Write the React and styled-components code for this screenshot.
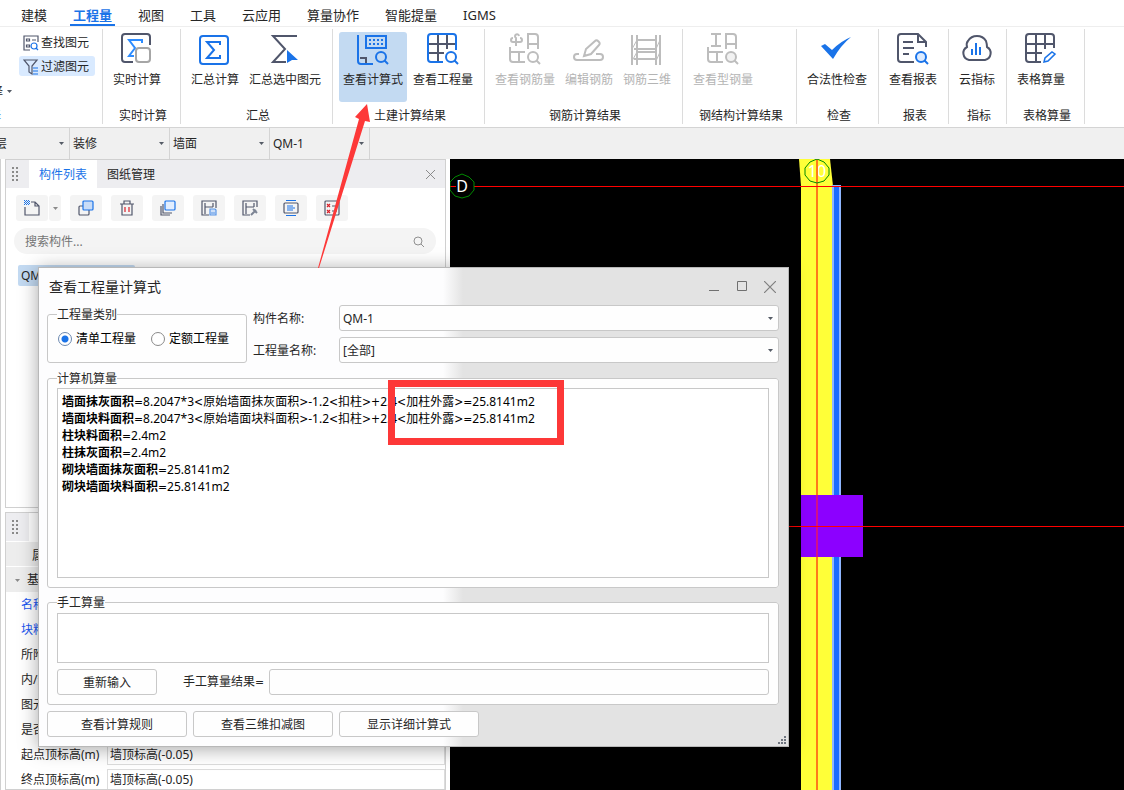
import React from 'react';
import styled, { createGlobalStyle } from 'styled-components';

const INK = '#50566b';
const BLUE = '#1a73e8';
const GREY = '#bdbdbd';
const RED = '#fd3838';

const GlobalStyle = createGlobalStyle`
  *, *::before, *::after { box-sizing: border-box; }
  html, body { margin: 0; padding: 0; background: #fff; }
  body, button, input, select, textarea {
    font-family: "Noto Sans", "Noto Sans CJK SC", sans-serif;
    font-size: 12px;
    line-height: 16px;
    color: #262626;
  }
  button, input, select, textarea {
    margin: 0; padding: 0; border: 0; background: none; outline: none; border-radius: 0;
  }
  button { white-space: nowrap; }
  svg { display: block; flex: none; }
`;

const Page = styled.div`
  position: relative;
  display: flex;
  flex-direction: column;
  height: 100vh;
  overflow: hidden;
`;

/* ---------- Menu ---------- */
const MenuBar = styled.nav`
  display: flex;
  gap: 20px;
  height: 27px;
  padding: 4px 0 0 18px;
  border-bottom: 1px solid #eee;
`;
const MenuTab = styled.button`
  height: 22px;
  padding: 1px 3px 0;
  font-size: 13px;
  line-height: 20px;
  color: ${(p) => (p.$active ? BLUE : '#262626')};
  font-weight: ${(p) => (p.$active ? 700 : 400)};
  border-bottom: 2px solid ${(p) => (p.$active ? BLUE : 'transparent')};
`;

/* ---------- Ribbon ---------- */
const Ribbon = styled.div`
  display: flex;
  height: 101px;
  padding: 2px 0 3px;
  border-bottom: 1px solid #d4d4d4;
`;
const Group = styled.section`
  display: flex;
  flex: none;
  flex-direction: column;
  justify-content: space-between;
  min-width: ${(p) => p.$min || 0}px;
  padding: 3px 6px 0;
  border-right: 1px solid #dcdcdc;
`;
const GroupTools = styled.div`
  display: flex;
  gap: 2px;
`;
const GroupName = styled.div`
  padding-left: 3px;
  text-align: center;
`;
const ToolButton = styled.button`
  display: flex;
  flex-direction: column;
  align-items: center;
  gap: 7px;
  height: 70px;
  padding: 1px 4px 0;
  border-radius: 3px;
  background: ${(p) => (p.$active ? '#c3daf2' : 'none')};
  color: ${(p) => (p.disabled ? '#b4b4b4' : '#262626')};
`;
const FilterGroup = styled.section`
  display: flex;
  flex: none;
  flex-direction: column;
  align-items: flex-start;
  gap: 3px;
  width: 103px;
  padding: 3px 0 0 19px;
  border-right: 1px solid #dcdcdc;
  overflow: hidden;
`;
const SmallTool = styled.button`
  display: flex;
  align-items: center;
  gap: 2px;
  width: 76px;
  height: 21px;
  padding: 2px 4px 0;
  border-radius: 3px;
  background: ${(p) => (p.$active ? '#d9eaff' : 'none')};
`;
const PickTool = styled.button`
  display: flex;
  align-items: center;
  gap: 4px;
  height: 21px;
  margin: 2px 0 0 -40px;
`;
const PickName = styled.div`
  margin: 3px 0 0 -42px;
  color: ${BLUE};
`;

/* ---------- Selector bar ---------- */
const SelectorBar = styled.div`
  display: flex;
  height: 31px;
  background: #f0f0f0;
`;
const SelectBox = styled.label`
  display: flex;
  align-items: center;
  flex: none;
  width: ${(p) => p.$width || 100}px;
  padding: 0 5px 0 3px;
  overflow: hidden;
  border-right: 1px solid #d4d4d4;
`;
const Select = styled.select`
  flex: 1;
  min-width: 0;
  height: 24px;
  margin-left: ${(p) => (p.$clipped ? -20 : 0)}px;
  padding-top: ${(p) => (p.$low ? 2 : 0)}px;
  appearance: none;
`;

/* ---------- Dock ---------- */
const Main = styled.main`
  display: flex;
  flex: 1;
  min-height: 0;
`;
const Dock = styled.aside`
  display: flex;
  flex: none;
  flex-direction: column;
  gap: 4px;
  width: 450px;
  padding: 0 4px;
  border-left: 1px solid #d0d0d0;
`;
const Panel = styled.section`
  flex: ${(p) => (p.$grow ? '1' : 'none')};
  height: ${(p) => (p.$grow ? 'auto' : '349px')};
  min-height: 0;
  border: 1px solid #d0d0d0;
  overflow: hidden;
`;
const PanelHead = styled.header`
  display: flex;
  align-items: center;
  height: 28px;
  padding-right: 10px;
  background: #ededf0;
`;
const Grip = styled.div`
  display: flex;
  justify-content: center;
  width: 23px;
  padding-right: 5px;
`;
const PanelTab = styled.button`
  width: 68px;
  height: 28px;
  padding-top: 2px;
  background: ${(p) => (p.$active ? '#fff' : 'none')};
  color: ${(p) => (p.$active ? BLUE : '#262626')};
`;
const IconButton = styled.button`
  display: flex;
  align-items: center;
  justify-content: center;
`;
const HeadClose = styled(IconButton)`
  margin-left: auto;
`;
const Tools = styled.div`
  display: flex;
  gap: 9px;
  padding: 7px 10px;
`;
const SplitTool = styled.div`
  display: flex;
  gap: 1px;
`;
const PanelTool = styled(IconButton)`
  width: ${(p) => (p.$narrow ? 12 : 32)}px;
  height: 26px;
  border-radius: 3px;
  background: #f4f4f4;
`;
const SearchBox = styled.label`
  display: flex;
  align-items: center;
  height: 26px;
  margin: 0 9px 0 8px;
  padding: 0 12px 0 11px;
  border-radius: 13px;
  background: #f4f4f4;
`;
const SearchInput = styled.input`
  flex: 1;
  padding-top: 2px;
  &::placeholder { color: #757575; opacity: 1; }
`;
const ListItem = styled.button`
  display: block;
  width: 117px;
  height: 21px;
  margin: 11px 12px;
  padding: 0 3px;
  border-radius: 2px;
  background: #c3daf2;
  text-align: left;
`;

const PropTable = styled.table`
  width: 100%;
  border-collapse: collapse;
  table-layout: fixed;
  th, td { padding: 0; height: 25px; font-weight: 400; text-align: left; }
  thead th { background: #ededed; border-bottom: 1px solid #fff; border-top: 1px solid #fff; }
`;
const NameCol = styled.col`
  width: 101px;
`;
const HeadCell = styled.th`
  && { padding: 3px 0 0 26px; }
`;
const SectionCell = styled.th`
  && { background: #ededed; }
`;
const SectionLabel = styled.span`
  display: flex;
  align-items: center;
  gap: 7px;
  padding: 2px 0 0 9px;
`;
const PropName = styled.th`
  && { padding: 2px 0 0 15px; }
  color: ${(p) => (p.$key ? '#1a56f0' : '#262626')};
  white-space: nowrap;
  overflow: hidden;
`;
const PropInput = styled.input`
  display: block;
  width: 100%;
  height: 21px;
  padding: 0 2px;
  border: 1px solid #dcdcdc;
`;

/* ---------- Model view ---------- */
const View = styled.div`
  position: relative;
  flex: 1;
  min-width: 0;
  background: #000;
  overflow: hidden;
`;
const ViewDrawing = styled.svg`
  position: absolute;
  inset: 0;
  width: 100%;
  height: 100%;
`;

/* ---------- Dialog ---------- */
const Dialog = styled.div`
  position: absolute;
  left: 38px;
  top: 267px;
  width: 751px;
  display: flex;
  flex-direction: column;
  padding: 0 9px 9px 8px;
  border: 1px solid #b8b8b8;
  background: linear-gradient(90deg, #fdfdfe 404px, #e3e3e3 424px);
  box-shadow: 0 2px 18px rgba(0, 0, 0, 0.35);
`;
const TitleBar = styled.header`
  display: flex;
  align-items: center;
  gap: 16px;
  height: 37px;
  padding: 0 3px 0 2px;
`;
const Title = styled.h1`
  flex: 1;
  margin: 0;
  font-size: 14px;
  line-height: 20px;
  font-weight: 400;
`;
const TopRow = styled.div`
  display: flex;
  gap: 6px;
  height: 67px;
`;
const Box = styled.fieldset`
  flex: none;
  min-width: 0;
  margin: 0;
  padding: ${(p) => p.$pad || '3px 9px 9px'};
  border: 1px solid #c8c8c8;
  border-radius: 3px;
  background: #fefefe;
  width: ${(p) => (p.$width ? `${p.$width}px` : 'auto')};
  height: ${(p) => (p.$height ? `${p.$height}px` : 'auto')};
`;
const Legend = styled.legend`
  padding: 0;
  line-height: 13px;
`;
const TypeBox = styled(Box)`
  align-self: flex-start;
  margin-top: 3px;
`;
const RadioRow = styled.div`
  display: flex;
  gap: 15px;
  padding: 10px 0 0 1px;
`;
const RadioLabel = styled.label`
  display: flex;
  align-items: center;
  gap: 4px;
  color: #000;
`;
const Radio = styled.input`
  appearance: none;
  width: 14px;
  height: 14px;
  border: 1px solid #8a8a8a;
  border-radius: 50%;
  background: #fff;
  &:checked {
    border-color: #6b88b0;
    background: radial-gradient(circle, ${BLUE} 3px, #fff 4px);
  }
`;
const Fields = styled.div`
  display: flex;
  flex: 1;
  flex-direction: column;
  gap: 6px;
  min-width: 0;
`;
const Field = styled.label`
  display: flex;
  align-items: center;
`;
const FieldName = styled.span`
  flex: none;
  width: 86px;
  padding-top: 2px;
`;
const Combo = styled.span`
  display: flex;
  flex: 1;
  align-items: center;
  height: 26px;
  padding: 0 5px 0 3px;
  border: 1px solid #c8c8c8;
  border-radius: 3px;
  background: #fefefe;
`;
const Output = styled.div`
  height: 190px;
  padding: 4px;
  border: 1px solid #c8c8c8;
  background: #fff;
  color: #000;
  line-height: 17px;
  white-space: nowrap;
`;
const Operator = styled.span`
  font-family: "DejaVu Sans Condensed", "DejaVu Sans", sans-serif;
  font-stretch: normal;
  line-height: 1;
`;
const Notes = styled.textarea`
  display: block;
  width: 100%;
  height: 50px;
  border: 1px solid #c8c8c8;
  background: #fff;
  resize: none;
`;
const ManualRow = styled.div`
  display: flex;
  align-items: center;
  gap: 26px;
  margin-top: 6px;
`;
const ResultField = styled.label`
  display: flex;
  flex: 1;
  align-items: center;
  gap: 5px;
`;
const ResultInput = styled.input`
  flex: 1;
  min-width: 0;
  height: 26px;
  border: 1px solid #c8c8c8;
  border-radius: 3px;
  background: #fefefe;
`;
const PushButton = styled.button`
  width: ${(p) => p.$width || 140}px;
  height: 26px;
  padding-top: 2px;
  border: 1px solid #c8c8c8;
  border-radius: 3px;
  background: #fefefe;
`;
const ButtonRow = styled.div`
  display: flex;
  gap: 6px;
  margin-top: 6px;
`;
const Boxes = styled.div`
  display: flex;
  flex-direction: column;
  gap: 8px;
`;
const SizeGrip = styled.svg`
  position: absolute;
  right: 2px;
  bottom: 2px;
`;

/* ---------- Annotations ---------- */
const Frame = styled.div`
  position: absolute;
  left: 388px;
  top: 380px;
  width: 176px;
  height: 65px;
  border: 7px solid ${RED};
`;
const Arrow = styled.svg`
  position: absolute;
  left: 310px;
  top: 100px;
  pointer-events: none;
`;

/* ---------- Icons ---------- */
const Caret = ({ color = '#555b66' }) => (
  <svg width="5" height="3" viewBox="0 0 5 3"><path d="M0 0h5L2.5 3z" fill={color} /></svg>
);
const Big = ({ children, c = INK }) => (
  <svg width="32" height="32" viewBox="0 0 32 32" fill="none" stroke={c} strokeWidth="2">{children}</svg>
);
const Lens = ({ c = BLUE, fill = 'none' }) => (
  <g stroke={c}><circle cx="24" cy="24" r="5" fill={fill} /><path d="M27.5 27.5l3.5 3.5" /></g>
);
const LowerFrame = () => <path d="M1 14v12a3 3 0 0 0 3 3h12M1 19h15M10 19v10" />;
const UpperFrame = () => <path d="M19 16V1h7a3 3 0 0 1 3 3v12M19 11h10" />;

const icons = {
  live: (
    <Big>
      <path d="M29 12V4a3 3 0 0 0-3-3H4a3 3 0 0 0-3 3v22a3 3 0 0 0 3 3h8" />
      <path d="M21 10V7H8l6 8-6 8h5" stroke="#2d8cff" />
      <rect x="15" y="15" width="14" height="14" rx="3" stroke="#a6a6a6" />
    </Big>
  ),
  sum: (
    <Big c={BLUE}>
      <rect x="1" y="3" width="28" height="28" rx="3" />
      <path d="M21 12V9H8l7 8-7 8h13v-3" />
    </Big>
  ),
  sumSel: (
    <Big>
      <path d="M28 3H4l12 13L4 29h13" />
      <path d="M18 17l11 10h-6l-5 3z" fill={BLUE} stroke="none" />
    </Big>
  ),
  formula: (
    <Big c={BLUE}>
      <path d="M1 2v26a3 3 0 0 0 3 3h12" />
      <path d="M3 25h6v5" stroke={INK} />
      <rect x="9" y="3" width="20" height="12" />
      <path d="M12 7h15M12 11h15" strokeDasharray="2 2" />
      <Lens />
    </Big>
  ),
  quantity: (
    <Big>
      <path d="M11 2v27M20 2v14M2 11h27M2 20h15" />
      <path d="M29 17V4a3 3 0 0 0-3-3H4a3 3 0 0 0-3 3v22a3 3 0 0 0 3 3h12" stroke={BLUE} />
      <Lens />
    </Big>
  ),
  rebar: (
    <Big c={GREY}>
      <path d="M10 3a2 2 0 1 0-3 2v8M4 5a2 2 0 1 0 0 4h7a2 2 0 1 0 0-4" />
      <UpperFrame /><LowerFrame /><Lens c={GREY} />
    </Big>
  ),
  editRebar: (
    <Big c={GREY}>
      <path d="M11 23l2-7 9-8a2 2 0 0 1 3 0l1 1a2 2 0 0 1 0 3l-8 9z" />
      <path d="M6 21H4a3 3 0 0 0 0 6h23a3 3 0 0 0 0-6h-4" />
    </Big>
  ),
  rebar3d: (
    <Big c={GREY}>
      <path d="M1 2v30M6 2v30M25 2v30M29 2v30M6 7h19M3 16h23M6 19h19M3 26h23" />
      <path d="M1 16l5-9M1 28l5-9M25 16l4-9M25 28l4-9" strokeWidth="1" />
    </Big>
  ),
  steel: (
    <Big c={GREY}>
      <path d="M4 1h10M4 13h10M9 1v12" /><UpperFrame /><LowerFrame /><Lens c={GREY} fill="#f2f2f2" />
    </Big>
  ),
  check: <Big><path d="M0 13l4-2 7 6Q20 8 30 4 20 12 12 26z" fill={BLUE} stroke="none" /></Big>,
  report: (
    <Big>
      <path d="M17 29H4a3 3 0 0 1-3-3V4a3 3 0 0 1 3-3h17l8 8v5M21 1v8h8M6 9h10M6 15h11M6 21h6" />
      <Lens fill="#dcebff" />
    </Big>
  ),
  cloud: (
    <Big>
      <path d="M8 27a7 7 0 0 1-2-13Q5 10 7 8q3-5 9-5t9 5q1 3 1 6a7 7 0 0 1-2 13z" />
      <path d="M11 16v6M15 10v12M19 14v8" stroke={BLUE} />
    </Big>
  ),
  sheet: (
    <Big>
      <path d="M11 2v27M20 2v14M2 11h27M2 20h15M29 15V4a3 3 0 0 0-3-3H4a3 3 0 0 0-3 3v22a3 3 0 0 0 3 3h12" />
      <path d="M19 29l1-4 7-6 3 2-7 7z" stroke={BLUE} strokeWidth="1.5" />
    </Big>
  ),
};

const Small = ({ children }) => (
  <svg width="16" height="16" viewBox="0 0 16 16" fill="none" stroke={INK} strokeWidth="1.2">{children}</svg>
);
const smallIcons = {
  find: (
    <Small>
      <path d="M15 7V1H1v14h6" />
      <path d="M3.5 4h3v2h-3zM3.5 10h3v2h-3zM9 5h4" />
      <g stroke={BLUE}><circle cx="11" cy="11" r="3" /><path d="M13 13l2 2" /></g>
    </Small>
  ),
  filter: (
    <Small>
      <path d="M1 1h13L9 7v8l-3-2V7z" />
      <path d="M10 9h5M10 12h5M10 15h5" stroke={BLUE} />
    </Small>
  ),
  add: (
    <Small>
      <path d="M7 2h4l4 4v9H1V7M11 2v4h4" />
      <path d="M0 .5h5M1 1.5h5M0 2.5h5M1 3.500h5M0 4.500h5" stroke={BLUE} strokeDasharray="1 1" strokeWidth="1" />
    </Small>
  ),
  copy: (
    <Small>
      <rect x="1" y="6" width="10" height="9" rx="1" />
      <rect x="5" y="1" width="10" height="9" rx="1" fill="#c8dcf7" stroke={BLUE} />
    </Small>
  ),
  trash: (
    <Small>
      <path d="M1 4h14M5 4V1h6v3M3 4v11h10V4" /><path d="M6 7v5M10 7v5" stroke="#d9202a" />
    </Small>
  ),
  layers: (
    <Small>
      <path d="M1 6v9h9M3 4v9h9" />
      <rect x="5" y="1" width="10" height="9" rx="1" fill="#e2eeff" stroke={BLUE} />
    </Small>
  ),
  store: (
    <Small>
      <path d="M8 15H1V1h14v7M4 3v11M4 7h8M12 3v4" />
      <path d="M9 9h5l1 1v5H9zM10 13h4" stroke="#5a96e6" fill="#cfe0f8" />
    </Small>
  ),
  pick: (
    <Small>
      <path d="M8 15H1V1h14v6M4 3v11M4 7h8M12 3v4" />
      <path d="M9 15l5-5M11 9l4 4" stroke="#7c8494" strokeWidth="2" />
    </Small>
  ),
  align: (
    <Small>
      <rect x="1" y="3" width="14" height="10" rx="1" />
      <path d="M3 .5h10M3 15.5h10M4 6h6M4 8h8M4 10h6" stroke={BLUE} strokeWidth="1" />
    </Small>
  ),
  cleanup: (
    <Small>
      <rect x="1" y="1" width="14" height="14" rx="1" />
      <path d="M3 4l3 3M6 4L3 7M3 10l3 3M6 10l-3 3" stroke="#d9202a" /><path d="M8 6h5M8 11h5" />
    </Small>
  ),
};
const Dots = () => (
  <svg width="8" height="16" viewBox="0 0 8 16" fill="#8a8a8a">
    {[1, 5, 9, 13].map((y) => (
      <g key={y}><rect x="1" y={y} width="2" height="2" /><rect x="5" y={y} width="2" height="2" /></g>
    ))}
  </svg>
);
const Cross = ({ size = 9 }) => (
  <svg width={size} height={size} viewBox="0 0 10 10" stroke="#808080" fill="none"><path d="M0 0l10 10M10 0L0 10" /></svg>
);

/* ---------- Data ---------- */
const menu = ['建模', '工程量', '视图', '工具', '云应用', '算量协作', '智能提量', 'IGMS'];
const groups = [
  { name: '实时计算', min: 78, tools: [['live', '实时计算']] },
  { name: '汇总', min: 152, tools: [['sum', '汇总计算'], ['sumSel', '汇总选中图元']] },
  { name: '土建计算结果', min: 152, tools: [['formula', '查看计算式', 'active'], ['quantity', '查看工程量']] },
  { name: '钢筋计算结果', min: 198, tools: [['rebar', '查看钢筋量', 'off'], ['editRebar', '编辑钢筋', 'off'], ['rebar3d', '钢筋三维', 'off']] },
  { name: '钢结构计算结果', min: 114, tools: [['steel', '查看型钢量', 'off']] },
  { name: '检查', min: 82, tools: [['check', '合法性检查']] },
  { name: '报表', min: 70, tools: [['report', '查看报表']] },
  { name: '指标', min: 58, tools: [['cloud', '云指标']] },
  { name: '表格算量', min: 78, tools: [['sheet', '表格算量']] },
];
const panelTools = [
  ['copy', '复制'], ['trash', '删除'], ['layers', '层间复制'], ['store', '存档'],
  ['pick', '提取'], ['align', '排序'], ['cleanup', '清理'],
];
const props = [
  ['名称', 'QM-1', true],
  ['块料厚度(mm)', '0', true],
  ['所附墙材质', ''],
  ['内/外墙面', ''],
  ['图元形状', ''],
  ['是否计算', ''],
  ['起点顶标高(m)', '墙顶标高(-0.05)'],
  ['终点顶标高(m)', '墙顶标高(-0.05)'],
];
const results = [
  ['墙面抹灰面积', '=8.2047*3<原始墙面抹灰面积>-1.2<扣柱>+2.4<加柱外露>=25.8141m2'],
  ['墙面块料面积', '=8.2047*3<原始墙面块料面积>-1.2<扣柱>+2.4<加柱外露>=25.8141m2'],
  ['柱块料面积', '=2.4m2'],
  ['柱抹灰面积', '=2.4m2'],
  ['砌块墙面抹灰面积', '=25.8141m2'],
  ['砌块墙面块料面积', '=25.8141m2'],
];

const Formula = ({ text }) => text.split(/([<>=+]+)/).map((part, i) => (
  i % 2 ? <Operator key={i}>{part}</Operator> : part
));

const ModelView = () => (
  <View>
    <ViewDrawing>
      <path d="M349 0h31l3 27h-32z" fill="#ffff38" />
      <rect x="351" y="27" width="31" height="700" fill="#ffff38" />
      <rect x="382" y="26" width="9" height="700" fill="#8fb6ff" />
      <rect x="384" y="27" width="5" height="700" fill="#1a6cff" />
      <rect x="351" y="336" width="62" height="62" fill="#8c00ff" />
      <g fill="#fff" textAnchor="middle" fontSize="16">
        <text x="12" y="33">D</text>
        <text x="367" y="18">10</text>
      </g>
      <path d="M367 0v336M367 398v400" stroke="#ff7a1a" strokeWidth="2" />
      <path d="M367 336v62" stroke="#d0108c" strokeWidth="2" />
      <rect x="24" y="27" width="100%" height="1" fill="#f00" />
      <rect x="0" y="27" width="6" height="1" fill="#f00" />
      <rect x="0" y="367" width="100%" height="1" fill="#f00" />
      <g fill="none" stroke="#008a00">
        <path d="M12 15l7 3 5 5v8l-5 6-7 2-7-2-5-6v-8l5-5z" />
        <path d="M367 0l7 3 5 6v7l-5 6-7 2-7-2-5-6V9l5-6z" />
      </g>
    </ViewDrawing>
  </View>
);

const CalcDialog = () => (
  <Dialog role="dialog" aria-labelledby="calc-title">
    <TitleBar>
      <Title id="calc-title">查看工程量计算式</Title>
      <IconButton aria-label="最小化">
        <svg width="12" height="12" viewBox="0 0 12 12"><path d="M1 9h10v1H1z" fill="#707070" /></svg>
      </IconButton>
      <IconButton aria-label="最大化">
        <svg width="12" height="12" viewBox="0 0 12 12"><path d="M1.5.5h9v9h-9z" fill="none" stroke="#707070" /></svg>
      </IconButton>
      <IconButton aria-label="关闭"><Cross size={12} /></IconButton>
    </TitleBar>
    <TopRow>
      <TypeBox $pad="0 9px" $width={200} $height={55}>
        <Legend>工程量类别</Legend>
        <RadioRow>
          <RadioLabel><Radio type="radio" name="kind" defaultChecked />清单工程量</RadioLabel>
          <RadioLabel><Radio type="radio" name="kind" />定额工程量</RadioLabel>
        </RadioRow>
      </TypeBox>
      <Fields>
        <Field>
          <FieldName>构件名称:</FieldName>
          <Combo><Select $low><option>QM-1</option></Select><Caret /></Combo>
        </Field>
        <Field>
          <FieldName>工程量名称:</FieldName>
          <Combo><Select $low><option>[全部]</option></Select><Caret /></Combo>
        </Field>
      </Fields>
    </TopRow>
    <Boxes>
      <Box>
        <Legend>计算机算量</Legend>
        <Output>
          {results.map(([name, value]) => (
            <div key={name}><b>{name}</b><Formula text={value} /></div>
          ))}
        </Output>
      </Box>
      <Box $pad="4px 9px 9px">
        <Legend>手工算量</Legend>
        <Notes aria-label="手工算量" />
        <ManualRow>
          <PushButton $width={100}>重新输入</PushButton>
          <ResultField>
            <span>手工算量结果<Operator>=</Operator></span>
            <ResultInput />
          </ResultField>
        </ManualRow>
      </Box>
    </Boxes>
    <ButtonRow>
      <PushButton>查看计算规则</PushButton>
      <PushButton>查看三维扣减图</PushButton>
      <PushButton>显示详细计算式</PushButton>
    </ButtonRow>
    <SizeGrip width="8" height="8" viewBox="0 0 8 8" fill="#707680">
      <path d="M6 0h2v2H6zM6 3h2v2H6zM3 3h2v2H3zM0 6h2v2H0zM3 6h2v2H3zM6 6h2v2H6z" />
    </SizeGrip>
  </Dialog>
);

export default function App() {
  return (
    <Page>
      <GlobalStyle />
      <MenuBar>
        {menu.map((m) => <MenuTab key={m} $active={m === '工程量'}>{m}</MenuTab>)}
      </MenuBar>
      <Ribbon>
        <FilterGroup>
          <SmallTool>{smallIcons.find}查找图元</SmallTool>
          <SmallTool $active>{smallIcons.filter}过滤图元</SmallTool>
          <PickTool>选择<Caret /></PickTool>
          <PickName>选择</PickName>
        </FilterGroup>
        {groups.map((g) => (
          <Group key={g.name} $min={g.min}>
            <GroupTools>
              {g.tools.map(([icon, label, state]) => (
                <ToolButton key={label} $active={state === 'active'} disabled={state === 'off'}>
                  {icons[icon]}
                  <span>{label}</span>
                </ToolButton>
              ))}
            </GroupTools>
            <GroupName>{g.name}</GroupName>
          </Group>
        ))}
      </Ribbon>
      <SelectorBar>
        <SelectBox $width={70}><Select $clipped aria-label="楼层"><option>首层</option></Select><Caret /></SelectBox>
        <SelectBox><Select aria-label="类别"><option>装修</option></Select><Caret /></SelectBox>
        <SelectBox><Select aria-label="类型"><option>墙面</option></Select><Caret /></SelectBox>
        <SelectBox><Select aria-label="构件"><option>QM-1</option></Select><Caret /></SelectBox>
      </SelectorBar>
      <Main>
        <Dock>
          <Panel>
            <PanelHead>
              <Grip><Dots /></Grip>
              <PanelTab $active>构件列表</PanelTab>
              <PanelTab>图纸管理</PanelTab>
              <HeadClose aria-label="关闭"><Cross /></HeadClose>
            </PanelHead>
            <Tools>
              <SplitTool>
                <PanelTool aria-label="新建">{smallIcons.add}</PanelTool>
                <PanelTool $narrow aria-label="新建选项"><Caret color="#8a8a8a" /></PanelTool>
              </SplitTool>
              {panelTools.map(([icon, label]) => (
                <PanelTool key={icon} aria-label={label}>{smallIcons[icon]}</PanelTool>
              ))}
            </Tools>
            <SearchBox>
              <SearchInput placeholder="搜索构件..." aria-label="搜索构件" />
              <svg width="11" height="11" viewBox="0 0 11 11" fill="none" stroke="#909090">
                <circle cx="5" cy="5" r="4" /><path d="M8 8l3 3" />
              </svg>
            </SearchBox>
            <ListItem>QM-1</ListItem>
          </Panel>
          <Panel $grow>
            <PanelHead>
              <Grip><Dots /></Grip>
              <PanelTab $active>属性列表</PanelTab>
            </PanelHead>
            <PropTable>
              <colgroup><NameCol /><col /></colgroup>
              <thead>
                <tr><HeadCell>属性名称</HeadCell><th>属性值</th></tr>
              </thead>
              <tbody>
                <tr>
                  <SectionCell colSpan={2}>
                    <SectionLabel><Caret color="#8a8a8a" />基本属性</SectionLabel>
                  </SectionCell>
                </tr>
                {props.map(([name, value, key]) => (
                  <tr key={name}>
                    <PropName $key={key}>{name}</PropName>
                    <td><PropInput defaultValue={value} aria-label={name} /></td>
                  </tr>
                ))}
              </tbody>
            </PropTable>
          </Panel>
        </Dock>
        <ModelView />
      </Main>
      <CalcDialog />
      <Frame />
      <Arrow width="70" height="170" viewBox="0 0 70 170" fill={RED}>
        <path d="M57 4l3 18-5-1L9 168 8 168 49 19l-4-2z" />
      </Arrow>
    </Page>
  );
}
